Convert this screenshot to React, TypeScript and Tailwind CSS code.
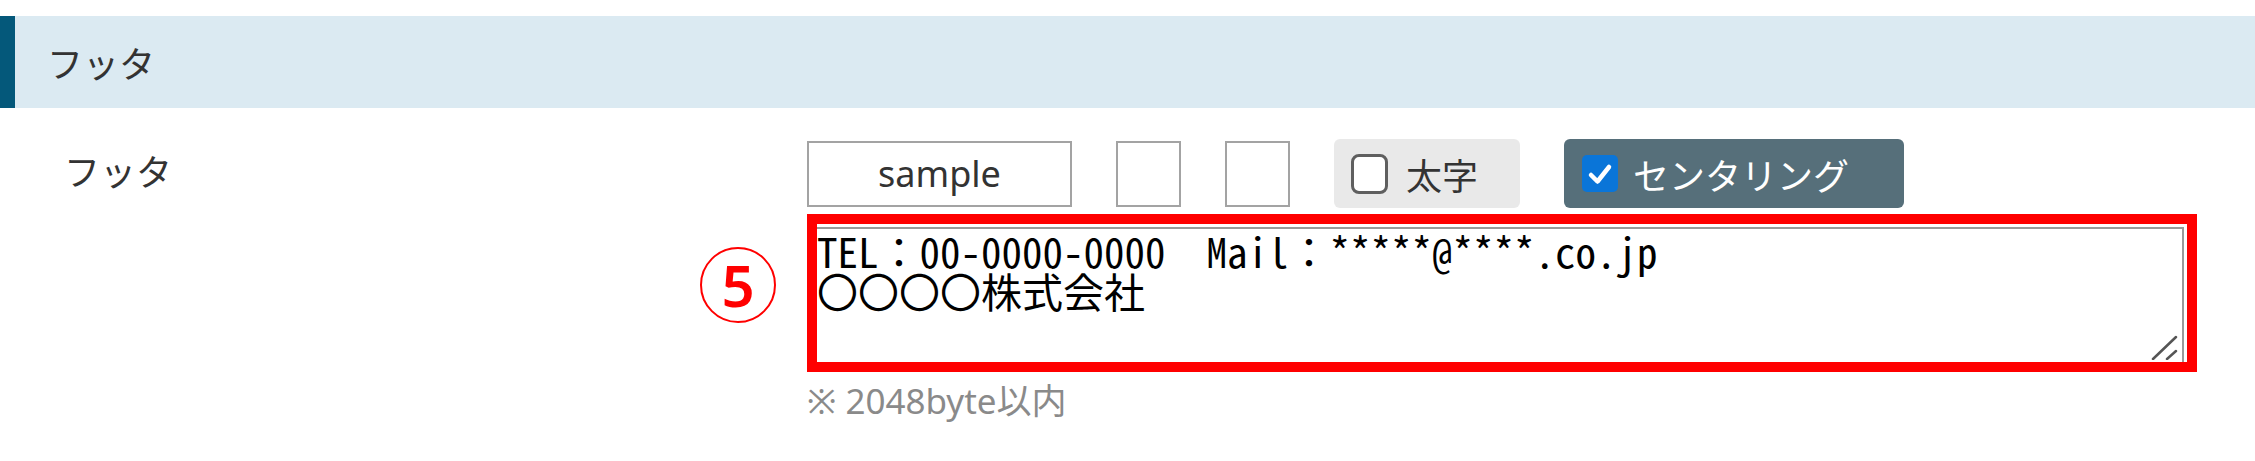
export default function App() {
  return (
    <div className="relative w-[2255px] h-[461px] bg-white pt-[16px] font-['Noto_Sans_CJK_JP',sans-serif] text-[#333]">
      <div className="h-[92px] bg-[#dbeaf2] border-l-[15px] border-[#04587a] flex items-center pl-[32px]">
        <span className="text-[36px] leading-none">フッタ</span>
      </div>
      <div className="flex">
        <div className="w-[807px] shrink-0 pl-[64px] pt-[36px] text-[36px] leading-[52px]">フッタ</div>
        <div className="flex flex-col pt-[31px]">
          <div className="flex items-center gap-[44px] h-[69px]">
            <div className="w-[265px] h-[66px] border-2 border-[#a3a3a3] flex items-center justify-center text-[36px] font-['Noto_Sans',sans-serif] text-[#333]">
              sample
            </div>
            <div className="w-[65px] h-[66px] border-2 border-[#a3a3a3]"></div>
            <div className="w-[65px] h-[66px] border-2 border-[#a3a3a3]"></div>
            <label className="w-[186px] h-[69px] rounded-[6px] bg-[#e9e9e9] flex items-center pl-[17px] gap-[18px]">
              <span className="w-[37px] h-[40px] rounded-[8px] border-[3px] border-[#5f5f5f] bg-white"></span>
              <span className="text-[36px] leading-none">太字</span>
            </label>
            <label className="w-[340px] h-[69px] rounded-[6px] bg-[#566f7a] flex items-center pl-[18px] gap-[15px]">
              <span className="w-[36px] h-[37px] rounded-[5px] bg-[#0a75d8] flex items-center justify-center">
                <svg width="26" height="24" viewBox="0 0 26 24">
                  <path d="M4 13 L10.5 19.5 L22 5" fill="none" stroke="white" strokeWidth="4.5" strokeLinecap="round" strokeLinejoin="round" />
                </svg>
              </span>
              <span className="text-[36px] leading-none text-white">センタリング</span>
            </label>
          </div>
          <div className="relative mt-[19px] w-[1377px] h-[140px]">
            <textarea
              readOnly
              className="w-full h-full resize-none border-2 border-[#9a9a9a] bg-white pl-[8px] pt-[1px] text-[41px] leading-[40px] text-black whitespace-pre font-['Noto_Sans_Mono_CJK_JP','Noto_Sans_CJK_JP',monospace] outline-none overflow-hidden"
              defaultValue={"TEL：00-0000-0000  Mail：*****@****.co.jp\n〇〇〇〇株式会社"}
            />
            <svg className="absolute right-[6px] bottom-[7px]" width="27" height="25" viewBox="0 0 27 25">
              <path d="M2 24 L25 2" stroke="#555" strokeWidth="2.5" strokeLinecap="round" />
              <path d="M16 24 L25 16" stroke="#555" strokeWidth="2.5" strokeLinecap="round" />
            </svg>
          </div>
          <div className="mt-[11px] text-[35px] leading-[46px] text-[#8a8a8a] font-['Noto_Sans','Noto_Sans_CJK_JP',sans-serif]">※ 2048byte以内</div>
        </div>
      </div>
      <div className="absolute left-[807px] top-[214px] w-[1390px] h-[158px] border-[10px] border-[#ff0000]"></div>
      <div className="absolute left-[700px] top-[247px] w-[76px] h-[76px] rounded-full border-2 border-[#ff0000] flex items-center justify-center">
        <span className="text-[58px] leading-none font-semibold text-[#ff0000] font-['Noto_Sans',sans-serif]">5</span>
      </div>
    </div>
  );
}
